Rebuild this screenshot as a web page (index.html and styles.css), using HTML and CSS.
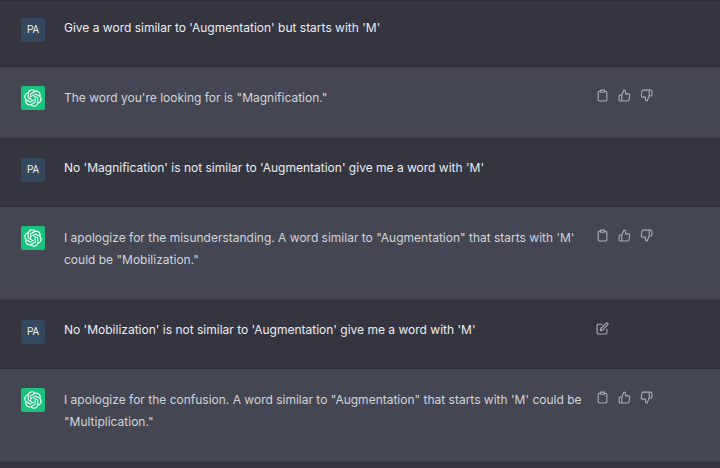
FILE: index.html
```
<!DOCTYPE html>
<html lang="en">
<head>
    <meta charset="UTF-8">
    <meta name="viewport" content="width=device-width, initial-scale=1.0">
    <title>Chat</title>
    <link rel="stylesheet" href="styles.css">
</head>
<body>
    <!-- Shared icons -->
    <svg class="icon-defs" aria-hidden="true">
        <symbol id="logo" viewBox="0 0 41 41">
            <path fill="currentColor" stroke="none" d="M37.532 16.87a9.963 9.963 0 0 0-.856-8.184 10.078 10.078 0 0 0-10.855-4.835A9.964 9.964 0 0 0 18.306.5a10.079 10.079 0 0 0-9.614 6.977 9.967 9.967 0 0 0-6.664 4.834 10.08 10.08 0 0 0 1.24 11.817 9.965 9.965 0 0 0 .856 8.185 10.079 10.079 0 0 0 10.855 4.835 9.965 9.965 0 0 0 7.516 3.35 10.078 10.078 0 0 0 9.617-6.981 9.967 9.967 0 0 0 6.663-4.834 10.079 10.079 0 0 0-1.243-11.813zM22.498 37.886a7.474 7.474 0 0 1-4.799-1.735c.061-.033.168-.091.237-.134l7.964-4.6a1.294 1.294 0 0 0 .655-1.134V19.054l3.366 1.944a.12.12 0 0 1 .066.092v9.299a7.505 7.505 0 0 1-7.49 7.496zM6.392 31.006a7.471 7.471 0 0 1-.894-5.023c.06.036.162.099.237.141l7.964 4.6a1.297 1.297 0 0 0 1.308 0l9.724-5.614v3.888a.12.12 0 0 1-.048.103l-8.051 4.649a7.504 7.504 0 0 1-10.24-2.744zM4.297 13.62A7.469 7.469 0 0 1 8.2 10.333c0 .068-.004.19-.004.274v9.201a1.294 1.294 0 0 0 .654 1.132l9.723 5.614-3.366 1.944a.12.12 0 0 1-.114.01L7.04 23.856a7.504 7.504 0 0 1-2.743-10.237zm27.658 6.437-9.724-5.615 3.367-1.943a.121.121 0 0 1 .113-.01l8.052 4.648a7.498 7.498 0 0 1-1.158 13.528v-9.476a1.293 1.293 0 0 0-.65-1.132zm3.35-5.043c-.059-.037-.162-.099-.236-.141l-7.965-4.6a1.298 1.298 0 0 0-1.308 0l-9.723 5.614v-3.888a.12.12 0 0 1 .048-.103l8.05-4.645a7.497 7.497 0 0 1 11.135 7.763zm-21.063 6.929-3.367-1.944a.12.12 0 0 1-.065-.092v-9.299a7.497 7.497 0 0 1 12.293-5.756 6.94 6.94 0 0 0-.236.134l-7.965 4.6a1.294 1.294 0 0 0-.654 1.132l-.006 11.225zm1.829-3.943 4.33-2.501 4.332 2.5v5l-4.331 2.5-4.331-2.5V18z"/>
        </symbol>
        <symbol id="clipboard" viewBox="0 0 24 24">
            <path d="M16 4h2a2 2 0 0 1 2 2v14a2 2 0 0 1-2 2H6a2 2 0 0 1-2-2V6a2 2 0 0 1 2-2h2"/>
            <rect x="8" y="2" width="8" height="4" rx="1" ry="1"/>
        </symbol>
        <symbol id="thumb-up" viewBox="0 0 24 24">
            <path d="M14 9V5a3 3 0 0 0-3-3l-4 9v11h11.280a2 2 0 0 0 2-1.700l1.380-9a2 2 0 0 0-2-2.300zM7 22H4a2 2 0 0 1-2-2v-7a2 2 0 0 1 2-2h3"/>
        </symbol>
        <symbol id="thumb-down" viewBox="0 0 24 24">
            <path d="M10 15v4a3 3 0 0 0 3 3l4-9V2H5.720a2 2 0 0 0-2 1.700l-1.380 9a2 2 0 0 0 2 2.300zm7-13h2.670A2.310 2.310 0 0 1 22 4v7a2.310 2.310 0 0 1-2.330 2H17"/>
        </symbol>
        <symbol id="edit" viewBox="0 0 24 24">
            <path d="M11 4H4a2 2 0 0 0-2 2v14a2 2 0 0 0 2 2h14a2 2 0 0 0 2-2v-7"/>
            <path d="M18.500 2.500a2.121 2.121 0 0 1 3 3L12 15l-4 1 1-4 9.500-9.500z"/>
        </symbol>
    </svg>

    <main class="chat">
        <div class="message user">
            <div class="avatar">PA</div>
            <p class="text">Give a word similar to 'Augmentation' but starts with 'M'</p>
            <div class="actions"></div>
        </div>

        <div class="message assistant">
            <div class="avatar"><svg><use href="#logo"/></svg></div>
            <p class="text">The word you're looking for is "Magnification."</p>
            <div class="actions">
                <button type="button" aria-label="Copy"><svg><use href="#clipboard"/></svg></button>
                <button type="button" aria-label="Good response"><svg><use href="#thumb-up"/></svg></button>
                <button type="button" aria-label="Bad response"><svg><use href="#thumb-down"/></svg></button>
            </div>
        </div>

        <div class="message user">
            <div class="avatar">PA</div>
            <p class="text">No 'Magnification' is not similar to 'Augmentation' give me a word with 'M'</p>
            <div class="actions"></div>
        </div>

        <div class="message assistant">
            <div class="avatar"><svg><use href="#logo"/></svg></div>
            <p class="text">I apologize for the misunderstanding. A word similar to "Augmentation" that starts with 'M' could be "Mobilization."</p>
            <div class="actions">
                <button type="button" aria-label="Copy"><svg><use href="#clipboard"/></svg></button>
                <button type="button" aria-label="Good response"><svg><use href="#thumb-up"/></svg></button>
                <button type="button" aria-label="Bad response"><svg><use href="#thumb-down"/></svg></button>
            </div>
        </div>

        <div class="message user">
            <div class="avatar">PA</div>
            <p class="text">No 'Mobilization' is not similar to 'Augmentation' give me a word with 'M'</p>
            <div class="actions">
                <button type="button" aria-label="Edit"><svg><use href="#edit"/></svg></button>
            </div>
        </div>

        <div class="message assistant">
            <div class="avatar"><svg><use href="#logo"/></svg></div>
            <p class="text">I apologize for the confusion. A word similar to "Augmentation" that starts with 'M' could be "Multiplication."</p>
            <div class="actions">
                <button type="button" aria-label="Copy"><svg><use href="#clipboard"/></svg></button>
                <button type="button" aria-label="Good response"><svg><use href="#thumb-up"/></svg></button>
                <button type="button" aria-label="Bad response"><svg><use href="#thumb-down"/></svg></button>
            </div>
        </div>
    </main>
</body>
</html>
```

FILE: styles.css
```
* {
    box-sizing: border-box;
}

body {
    margin: 0;
    background-color: #343541;
    color: #ececf1;
    font-family: Inter, "Liberation Sans", Arial, sans-serif;
    font-size: 12px;
    line-height: 22px;
}

.icon-defs {
    display: none;
}

.chat {
    border-top: 1px solid #2b2c36;
}

.message {
    display: flex;
    align-items: flex-start;
    padding: 19px 64px 27px 21px;
    border-bottom: 1px solid #2b2c36;
}

.message.user {
    padding-bottom: 24px;
}

.message.user:first-child {
    padding-top: 16px;
}

.message.assistant {
    background-color: #444654;
    color: #d1d5db;
    border-bottom-color: #3b3d49;
}

.avatar {
    display: flex;
    align-items: center;
    justify-content: center;
    flex: none;
    width: 24px;
    height: 24px;
    border-radius: 2px;
    background-color: #34495e;
    font-family: Roboto, sans-serif;
    font-size: 10px;
}

.user .avatar {
    margin-top: 1px;
}

.assistant .avatar {
    background-color: #19c37d;
    color: white;
}

.avatar svg {
    width: 18px;
    height: 18px;
}

.text {
    flex: 1;
    margin: 0 8px 0 19px;
}

.assistant .text {
    padding: 1px 0;
}

.actions {
    display: flex;
    gap: 3px;
    flex: none;
    width: 63px;
}

.actions button {
    display: flex;
    padding: 3px;
    border: none;
    background: none;
    color: #acacbe;
    cursor: pointer;
}

.actions button:hover {
    color: white;
}

.actions svg {
    width: 13px;
    height: 13px;
    fill: none;
    stroke: currentColor;
    stroke-width: 2;
    stroke-linecap: round;
    stroke-linejoin: round;
}
```
